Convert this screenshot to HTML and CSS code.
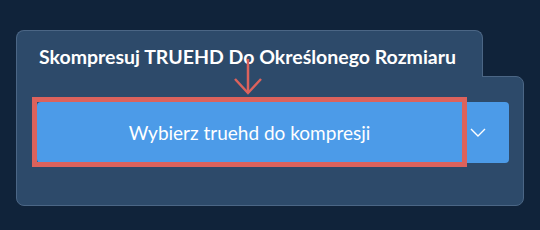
FILE: index.html
```html
<!DOCTYPE html>
<html lang="pl">

<head>
    <meta charset="UTF-8">
    <meta name="viewport" content="width=device-width, initial-scale=1.0">
    <title>Skompresuj TRUEHD</title>
    <link rel="stylesheet" href="styles.css">
</head>

<body>
    <div class="card">
        <div class="card-tab">
            <h1 class="card-title">Skompresuj TRUEHD Do Określonego Rozmiaru</h1>
        </div>
        <div class="card-body">
            <div class="picker">
                <a class="picker-main" href="javascript:;">
                    Wybierz truehd do kompresji
                    <!-- ramka podświetlenia -->
                    <span class="highlight"></span>
                </a>
                <a class="picker-toggle" href="javascript:;">
                    <svg width="16" height="9" viewBox="0 0 16 9">
                        <polyline points="1,1 8,8 15,1" fill="none" stroke="#ffffff" stroke-width="1.4" />
                    </svg>
                </a>
            </div>
        </div>
        <!-- strzałka -->
        <svg class="pointer" width="30" height="38" viewBox="0 0 30 38">
            <line x1="14" y1="0" x2="14" y2="34" stroke="#dc625c" stroke-width="2.5" />
            <polyline points="1,20 14,34 27,20" fill="none" stroke="#dc625c" stroke-width="2.5" />
        </svg>
    </div>
</body>

</html>
```

FILE: styles.css
```css
* {
    margin: 0;
    padding: 0;
    box-sizing: border-box;
}

body {
    background-color: #10233a;
    font-family: Lato, "Noto Sans", sans-serif;
    color: #ffffff;
}

a {
    text-decoration: none;
    color: #ffffff;
}

.card {
    position: relative;
    width: 508px;
    margin: 30px 0 0 16px;
}

.card-tab {
    position: relative;
    z-index: 1;
    width: 467px;
    height: 47px;
    margin-bottom: -1px;
    padding: 14px 0 0 22px;
    background-color: #2d4a6a;
    border: 1px solid #4b6685;
    border-bottom: none;
    border-radius: 8px 8px 0 0;
}

.card-title {
    font-size: 19.5px;
    font-weight: 700;
    line-height: 24px;
}

.card-body {
    height: 130px;
    padding: 25px 14px 0 20px;
    background-color: #2d4a6a;
    border: 1px solid #4b6685;
    border-radius: 0 8px 8px 8px;
}

.picker {
    display: flex;
    height: 61px;
    background-color: #4c9be8;
    border-radius: 4px;
}

.picker-main {
    position: relative;
    flex: 1;
    display: flex;
    align-items: center;
    justify-content: center;
    font-size: 19px;
    font-weight: 400;
}

.highlight {
    position: absolute;
    top: -5px;
    bottom: -4px;
    left: -5px;
    right: -5px;
    border: 5px solid #dc625c;
}

.picker-toggle {
    width: 47px;
    display: flex;
    align-items: center;
    padding-left: 8px;
}

.pointer {
    position: absolute;
    z-index: 2;
    left: 218px;
    top: 29px;
}
```
